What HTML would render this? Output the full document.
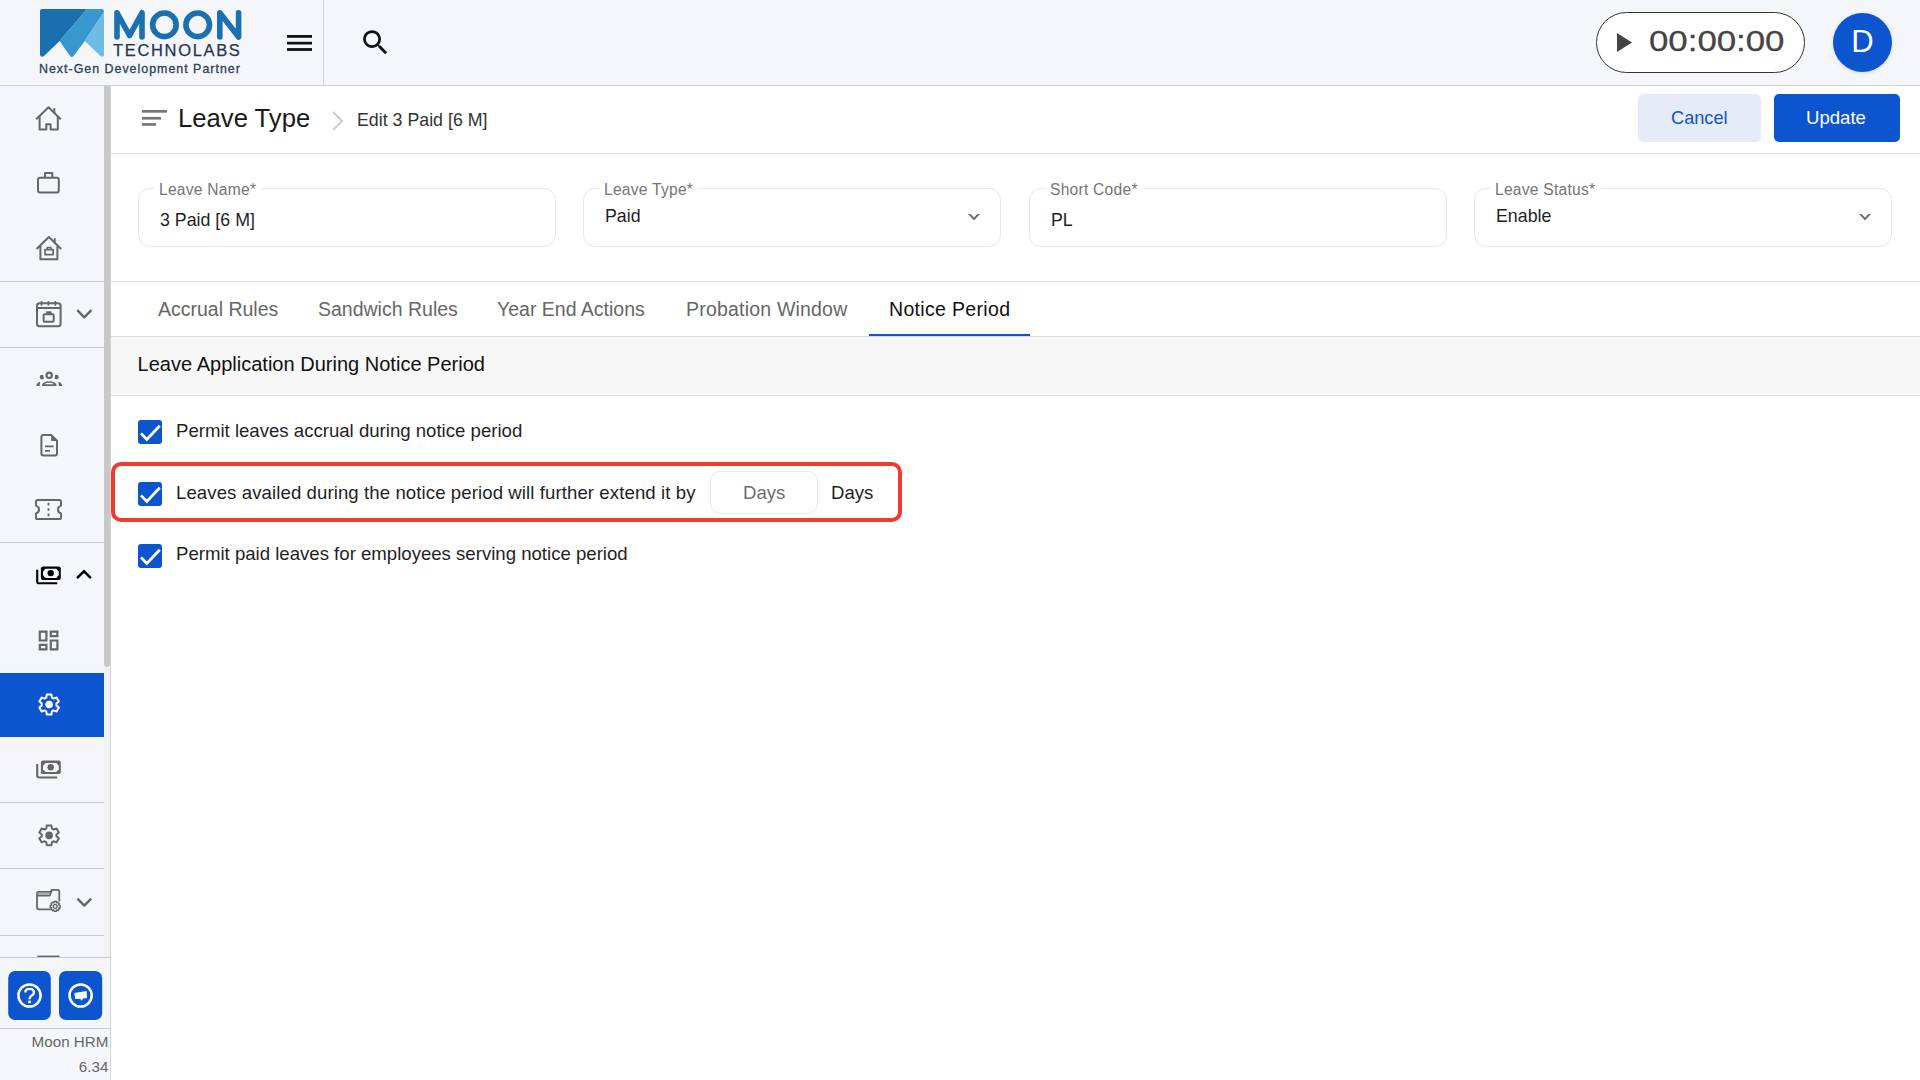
<!DOCTYPE html>
<html><head><meta charset="utf-8">
<style>
*{box-sizing:border-box;margin:0;padding:0}
html,body{width:1920px;height:1080px;overflow:hidden;background:#fff;font-family:"Liberation Sans",sans-serif;color:#1f1f1f}
.abs{position:absolute}
.t{position:absolute;white-space:nowrap;line-height:1}
#hdr{position:absolute;left:0;top:0;width:1920px;height:86px;background:#f5f6fa;border-bottom:1px solid #d2d3d7}
#side{position:absolute;left:0;top:86px;width:111px;height:994px;background:#f5f6fa;border-right:1px solid #d2d3d7}
.sep{position:absolute;left:0;width:104px;height:1px;background:#c9cacd}
.ic{position:absolute;left:0;top:0;overflow:visible}
.g{stroke:#666;fill:none;stroke-width:2}
.field{position:absolute;top:188px;width:418px;height:59px;border:1px solid #e7e8ec;border-radius:12px;background:#fff}
.lbl{position:absolute;top:-9.3px;padding:0 6px 0 5px;letter-spacing:0.25px;background:#fff;font-size:15.6px;line-height:20px;color:#757575;white-space:nowrap}
.val{position:absolute;font-size:17.8px;line-height:1;color:#1f1f1f;white-space:nowrap}
.tab{position:absolute;top:300px;font-size:19.5px;line-height:1;color:#666;white-space:nowrap}
.cb{position:absolute;left:138px;width:24px;height:24px;background:#0d55cf;border-radius:3px}
.row{position:absolute;left:176px;font-size:18.6px;line-height:1;color:#1f1f1f;white-space:nowrap}
</style></head>
<body>
<!-- HEADER -->
<div id="hdr">
  <svg class="abs" style="left:0;top:0" width="330" height="85" viewBox="0 0 330 85">
    <g>
      <path d="M40 11 Q40 9 42 9 L87 9 L59.6 41 L44 56 Q41 58 40 55 Z" fill="#1a6fae"/>
      <path d="M87 9 L102 9 Q104 9 104 12 L84.8 41 L73.5 56 Q71.8 58 70 56 L59.6 41 Z" fill="#3a96ce"/>
      <path d="M104 12 L104 55 Q103.5 58 100.5 56 L84.8 41 Z" fill="#70bbe6"/>
    </g>
    <g stroke="#1a70b0" stroke-width="5.6" fill="none" stroke-linecap="round" stroke-linejoin="round">
      <path d="M117 37 L117 12.8 L129.6 35.5 L142 12.8 L142 37"/>
      <circle cx="164.4" cy="24.8" r="11.8"/>
      <circle cx="197.7" cy="24.8" r="11.8"/>
      <path d="M219.8 37 L219.8 12.8 L238.6 37 L238.6 12.8"/>
    </g>
  </svg>
  <div class="t" style="left:113px;top:42px;font-size:16.5px;color:#26344f;letter-spacing:1.66px;-webkit-text-stroke:0.25px #26344f">TECHNOLABS</div>
  <div class="t" style="left:39px;top:62.6px;font-size:12.4px;color:#2c3e5c;letter-spacing:1.01px;-webkit-text-stroke:0.3px #2c3e5c">Next-Gen Development Partner</div>
  <div class="abs" style="left:323px;top:0;width:1px;height:85px;background:#d2d3d7"></div>
  <svg class="abs" style="left:287px;top:35px" width="25" height="17" viewBox="0 0 25 17"><g fill="#111"><rect x="0" y="0" width="25" height="2.8"/><rect x="0" y="6.8" width="25" height="2.7"/><rect x="0" y="13.1" width="25" height="2.8"/></g></svg>
  <svg class="abs" style="left:359px;top:26px" width="33" height="33" viewBox="0 0 24 24"><path d="M15.5 14h-.79l-.28-.27C15.41 12.59 16 11.11 16 9.5 16 5.91 13.090 3 9.5 3S3 5.91 3 9.5 5.91 16 9.5 16c1.61 0 3.09-.59 4.23-1.57l.27.28v.79l5 4.99L20.49 19l-4.99-5zm-6 0C7.01 14 5 11.99 5 9.5S7.01 5 9.5 5 14 7.01 14 9.5 11.99 14 9.5 14z" fill="#111"/></svg>
  <div class="abs" style="left:1596px;top:12px;width:209px;height:61px;border:1.3px solid #333;border-radius:31px;background:#fff"></div>
  <svg class="abs" style="left:1617px;top:33px" width="16" height="19" viewBox="0 0 16 19"><path d="M0 0 L15 9.5 L0 19 Z" fill="#444"/></svg>
  <div class="t" style="left:1649px;top:27px;font-size:29px;color:#444;-webkit-text-stroke:0.3px #444;transform:scaleX(1.2);transform-origin:0 0">00:00:00</div>
  <div class="abs" style="left:1833px;top:13px;width:59px;height:59px;border-radius:50%;background:#0d55cf;box-shadow:0 1px 4px rgba(0,0,0,0.12)"></div>
  <div class="t" style="left:1851.3px;top:26.3px;font-size:31px;color:#fff">D</div>
</div>

<!-- SIDEBAR -->
<div id="side"></div>
<svg class="abs" style="left:0;top:0" width="111" height="1080" viewBox="0 0 111 1080">
 <g fill="none" stroke="#666" stroke-width="2" stroke-linejoin="round">
  <!-- home -->
  <path d="M36.2 119.3 L48.5 107.2 L60.8 119.3"/>
  <path d="M54.3 108.2 V113.5"/>
  <path d="M39.6 115.8 V129.4 H46.3 V124.3 H50.6 V129.4 H57.8 V115.8"/>
  <!-- briefcase -->
  <rect x="38" y="177.8" width="20.8" height="14.6" rx="2"/>
  <path d="M45 177.5 V173 H52.3 V177.5"/>
  <!-- house briefcase -->
  <path d="M36.6 249 L48.8 237 L61.2 249"/>
  <path d="M54.7 238.2 V243.5"/>
  <path d="M40.4 246 V259.2 H57.4 V246"/>
  <rect x="45" y="249.6" width="8.1" height="5" stroke-width="1.7"/>
  <path d="M47.2 249.4 V247.6 H50.9 V249.4" stroke-width="1.5"/>
  <!-- calendar -->
  <rect x="37" y="303.2" width="23.6" height="23" rx="2.5"/>
  <path d="M37 308 H60.6"/>
  <path d="M41.5 301 V305.8 M48.4 301 V305.8 M55.3 301 V305.8" stroke-width="1.6"/>
  <rect x="43.6" y="314.2" width="10.1" height="7.5" rx="1.2" stroke-width="2"/>
  <path d="M45.6 315 L46.4 311.3 H51.2 L52.2 315 Z" fill="#666" stroke="none"/>
  <path d="M77.2 310.2 L84.3 317.3 L91.4 310.2" stroke-width="2.4"/>
  <!-- people -->
  <circle cx="49.2" cy="375.3" r="2.7" stroke-width="2.2"/>
  <!-- doc -->
  <path d="M43.4 435.1 H51.3 L57 440.8 V453.4 Q57 455.4 55 455.4 H43.4 Q41.4 455.4 41.4 453.4 V437.1 Q41.4 435.1 43.4 435.1 Z"/>
  <path d="M45 446.3 H53.6 M45 450.9 H50" stroke-width="1.7"/>
  <!-- ticket -->
  <path d="M37.6 500 H59.4 Q61 500 61 501.6 V505.6 Q58 506.4 58 509.5 Q58 512.6 61 513.4 V517.4 Q61 519 59.4 519 H37.6 Q36 519 36 517.4 V513.4 Q39 512.6 39 509.5 Q39 506.4 36 505.6 V501.6 Q36 500 37.6 500 Z"/>
  <path d="M48.5 502.8 V505.4 M48.5 508.2 V510.8 M48.5 513.6 V516.2" stroke-width="1.9"/>
  <!-- chevron folder -->
  <path d="M77.4 898.6 L84.3 905.6 L91.2 898.6" stroke-width="2.4"/>
 </g>
 <g fill="#666">
  <circle cx="42.1" cy="377.1" r="2.4"/>
  <circle cx="56.3" cy="377.1" r="2.4"/>
  <circle cx="49.2" cy="375.3" r="5.2" fill="none" stroke="#f5f6fa" stroke-width="1.6"/>
  <path d="M41.7 385.9 Q42.6 381.3 49.2 381.3 Q55.8 381.3 56.8 385.9 Z"/>
  <path d="M44.6 384.2 Q45.6 382.8 49.2 382.8 Q52.8 382.8 53.8 384.2 Z" fill="#f5f6fa"/>
  <path d="M36.3 385.9 Q36.8 382.6 40.2 381.8 L39.6 385.9 Z"/>
  <path d="M62.2 385.9 Q61.7 382.6 58.3 381.8 L58.9 385.9 Z"/>
  <path d="M51.2 435.1 V441 H57 Z"/>
 </g>
 <!-- money black -->
 <g>
  <path d="M37.2 569.8 V581.4 Q37.2 583.3 39.1 583.3 H57.2" stroke="#000" stroke-width="2.1" fill="none"/>
  <rect x="40.9" y="566.4" width="19.9" height="13.5" rx="2.2" fill="#000"/>
  <path d="M43 571.6 L45.4 568.8 H56.3 L58.8 571.6 V575.1 L56.3 577.9 H45.4 L43 575.1 Z" fill="#f5f6fa"/>
  <circle cx="50.7" cy="573.1" r="3.2" fill="#000"/>
  <path d="M77 578.2 L84 571.3 L90.9 578.2" stroke="#000" stroke-width="2.4" fill="none"/>
 </g>
 <!-- dashboard -->
 <path transform="translate(35.4 627.3) scale(1.1)" fill="#666" d="M19 5v2h-4V5h4M9 5v6H5V5h4m10 8v6h-4v-6h4M9 17v2H5v-2h4M21 3h-8v6h8V3zM11 3H3v10h8V3zm10 8h-8v10h8V11zm-10 4H3v6h8v-6z"/>
 <!-- active -->
 <rect x="0" y="673" width="104" height="64" fill="#0d55cf"/>
 <g transform="translate(49.1 704.5)">
  <path d="M-2.89 -6.81 L-2.29 -9.94 L2.29 -9.94 L2.89 -6.81 L4.45 -5.91 L7.46 -6.96 L9.75 -2.98 L7.34 -0.90 L7.34 0.90 L9.75 2.98 L7.46 6.96 L4.45 5.91 L2.89 6.81 L2.29 9.94 L-2.29 9.94 L-2.89 6.81 L-4.45 5.91 L-7.46 6.96 L-9.75 2.98 L-7.34 0.90 L-7.34 -0.90 L-9.75 -2.98 L-7.46 -6.96 L-4.45 -5.91 Z" fill="none" stroke="#fff" stroke-width="2" stroke-linejoin="round"/>
  <circle r="3.8" fill="#fff"/>
 </g>
 <!-- money gray -->
 <g transform="translate(0 194.2)">
  <path d="M37.2 569.8 V581.4 Q37.2 583.3 39.1 583.3 H57.2" stroke="#666" stroke-width="2.1" fill="none"/>
  <rect x="40.9" y="566.4" width="19.9" height="13.5" rx="2.2" fill="#666"/>
  <path d="M43 571.6 L45.4 568.8 H56.3 L58.8 571.6 V575.1 L56.3 577.9 H45.4 L43 575.1 Z" fill="#f5f6fa"/>
  <circle cx="50.7" cy="573.1" r="3.2" fill="#666"/>
 </g>
 <!-- gear gray -->
 <g transform="translate(49.1 835.4)">
  <path d="M-2.89 -6.81 L-2.29 -9.94 L2.29 -9.94 L2.89 -6.81 L4.45 -5.91 L7.46 -6.96 L9.75 -2.98 L7.34 -0.90 L7.34 0.90 L9.75 2.98 L7.46 6.96 L4.45 5.91 L2.89 6.81 L2.29 9.94 L-2.29 9.94 L-2.89 6.81 L-4.45 5.91 L-7.46 6.96 L-9.75 2.98 L-7.34 0.90 L-7.34 -0.90 L-9.75 -2.98 L-7.46 -6.96 L-4.45 -5.91 Z" fill="none" stroke="#666" stroke-width="2" stroke-linejoin="round"/>
  <circle r="3.8" fill="#666"/>
 </g>
 <!-- folder gear -->
 <g fill="none" stroke="#666" stroke-width="1.8" stroke-linejoin="round">
  <path d="M50.6 909.4 H38.8 Q37 909.4 37 907.6 V893.6 Q37 891.8 38.8 891.8 H50.3 L51.9 889.8 H57.6 Q59.3 889.8 59.3 891.6 V901.6"/>
  <path d="M37 895.6 H49.6 L51.9 890.5"/>
 </g>
 <path d="M37.8 892.7 H50.2 L49 895 H37.8 Z" fill="#aaa"/>
 <g transform="translate(55.2 906.4)">
  <path d="M-1.33 -3.66 L-1.04 -4.89 L1.04 -4.89 L1.33 -3.66 L1.65 -3.53 L2.72 -4.19 L4.19 -2.72 L3.53 -1.65 L3.66 -1.33 L4.89 -1.04 L4.89 1.04 L3.66 1.33 L3.53 1.65 L4.19 2.72 L2.72 4.19 L1.65 3.53 L1.33 3.66 L1.04 4.89 L-1.04 4.89 L-1.33 3.66 L-1.65 3.53 L-2.72 4.19 L-4.19 2.72 L-3.53 1.65 L-3.66 1.33 L-4.89 1.04 L-4.89 -1.04 L-3.66 -1.33 L-3.53 -1.65 L-4.19 -2.72 L-2.72 -4.19 L-1.65 -3.53 Z" fill="#f5f6fa" stroke="#666" stroke-width="1.5" stroke-linejoin="round"/>
  <circle r="1.9" fill="none" stroke="#666" stroke-width="1.4"/>
 </g>
 <!-- separators -->
 <g fill="#c9cacd">
  <rect x="0" y="281" width="104" height="1"/>
  <rect x="0" y="347" width="104" height="1"/>
  <rect x="0" y="542" width="104" height="1"/>
  <rect x="0" y="802" width="104" height="1"/>
  <rect x="0" y="868" width="104" height="1"/>
  <rect x="0" y="935" width="104" height="1"/>
 </g>
 <rect x="37.3" y="955.6" width="22.3" height="1.5" fill="#666"/>
 <!-- scrollbar -->
 <rect x="104" y="86" width="6" height="871" fill="#f1f1f1"/>
 <path d="M104 86 H110 V664 Q110 667 107 667 Q104 667 104 664 Z" fill="#c8c8c8"/>
 <!-- bottom panel -->
 <rect x="0" y="957" width="110" height="123" fill="#f5f6fa"/>
 <rect x="0" y="957" width="110" height="1" fill="#c9cacd"/>
 <rect x="0" y="1028" width="110" height="1" fill="#c9cacd"/>
 <rect x="8.2" y="971" width="42.6" height="49" rx="7" fill="#0d55cf"/>
 <rect x="59" y="971" width="43.2" height="49" rx="7" fill="#0d55cf"/>
 <circle cx="29.5" cy="995.5" r="11.1" fill="none" stroke="#fff" stroke-width="2.5"/>
 <path d="M25.3 992.4 Q25.3 988.9 29.6 988.9 Q33.9 988.9 33.9 992.4 Q33.9 994.3 31.7 995.6 Q29.5 996.9 29.5 999.2" fill="none" stroke="#fff" stroke-width="2.3"/>
 <rect x="28.2" y="1000.6" width="2.6" height="2.6" fill="#fff"/>
 <circle cx="80.6" cy="995.5" r="11.1" fill="none" stroke="#fff" stroke-width="2.5"/>
 <path d="M74.3 992.9 L86.6 991.1 L87 998 L83 998.5 L81.7 1000.8 L80.2 998.8 L75.2 999.1 Z" fill="#fff"/>
</svg>
<div class="t" style="right:1811.6px;top:1034px;font-size:15.2px;color:#666">Moon HRM</div>
<div class="t" style="right:1811.6px;top:1059px;font-size:15.2px;color:#666">6.34</div>


<!-- MAIN -->
<div class="abs" style="left:111px;top:153px;width:1809px;height:1px;background:#dedede"></div>
<svg class="abs" style="left:142px;top:110px" width="25" height="16" viewBox="0 0 25 16"><g fill="#777"><rect x="0" y="0" width="25" height="2.7"/><rect x="0" y="6.9" width="19" height="2.7"/><rect x="0" y="13.1" width="14" height="2.7"/></g></svg>
<div class="t" style="left:178.3px;top:104.9px;font-size:26.6px;color:#1a1a1a;transform:scaleX(0.965);transform-origin:0 0">Leave Type</div>
<svg class="abs" style="left:331px;top:110px" width="14" height="22" viewBox="0 0 14 22"><path d="M2 2 L11 11 L2 20" stroke="#cfcfcf" stroke-width="2.2" fill="none"/></svg>
<div class="t" style="left:357px;top:112px;font-size:17.8px;color:#333">Edit 3 Paid [6 M]</div>
<div class="abs" style="left:1638px;top:94px;width:123px;height:48px;background:#e6ecf7;border-radius:5px"></div>
<div class="t" style="left:1671px;top:109px;font-size:18.2px;color:#0d55cf">Cancel</div>
<div class="abs" style="left:1774px;top:94px;width:126px;height:48px;background:#0d55cf;border-radius:5px"></div>
<div class="t" style="left:1806px;top:109px;font-size:18.6px;color:#fff">Update</div>

<!-- fields -->
<div class="field" style="left:138px"><div class="lbl" style="left:15px">Leave Name*</div><div class="val" style="left:21px;top:22.5px">3 Paid [6 M]</div></div>
<div class="field" style="left:583px"><div class="lbl" style="left:15px">Leave Type*</div><div class="val" style="left:21px;top:19.2px">Paid</div>
  <svg class="abs" style="left:384px;top:25px" width="12" height="7" viewBox="0 0 12 7"><path d="M0 0.1 L2.7 0.1 L6 3.5 L9.3 0.1 L12 0.1 L6 6.4 Z" fill="#707070"/></svg></div>
<div class="field" style="left:1029px"><div class="lbl" style="left:15px">Short Code*</div><div class="val" style="left:21px;top:22.6px">PL</div></div>
<div class="field" style="left:1474px"><div class="lbl" style="left:15px">Leave Status*</div><div class="val" style="left:21px;top:19.2px">Enable</div>
  <svg class="abs" style="left:384px;top:25px" width="12" height="7" viewBox="0 0 12 7"><path d="M0 0.1 L2.7 0.1 L6 3.5 L9.3 0.1 L12 0.1 L6 6.4 Z" fill="#707070"/></svg></div>

<div class="abs" style="left:111px;top:281px;width:1809px;height:1px;background:#dedede"></div>
<div class="tab" style="left:158px">Accrual Rules</div>
<div class="tab" style="left:318px">Sandwich Rules</div>
<div class="tab" style="left:497px">Year End Actions</div>
<div class="tab" style="left:686px;letter-spacing:0.2px">Probation Window</div>
<div class="tab" style="left:889px;color:#111;letter-spacing:0.33px">Notice Period</div>
<div class="abs" style="left:869px;top:334px;width:161px;height:2px;background:#0d55cf"></div>
<div class="abs" style="left:111px;top:336px;width:1809px;height:60px;background:#f7f7f7;border-top:1px solid #dedede;border-bottom:1px solid #dedede"></div>
<div class="t" style="left:137.6px;top:353.7px;font-size:20.05px;color:#111">Leave Application During Notice Period</div>

<!-- rows -->
<div class="cb" style="top:420px"><svg width="24" height="24" viewBox="0 0 24 24"><path d="M3 13.4 L8.8 19.5 L21.8 5.8" stroke="#fff" stroke-width="2.8" fill="none"/></svg></div>
<div class="row" style="top:421.7px">Permit leaves accrual during notice period</div>
<div class="abs" style="left:111px;top:462px;width:791px;height:60px;border:4px solid #ef3b30;border-radius:10px"></div>
<div class="cb" style="top:482px"><svg width="24" height="24" viewBox="0 0 24 24"><path d="M3 13.4 L8.8 19.5 L21.8 5.8" stroke="#fff" stroke-width="2.8" fill="none"/></svg></div>
<div class="row" style="top:483.5px;letter-spacing:0.09px">Leaves availed during the notice period will further extend it by</div>
<div class="abs" style="left:710px;top:470.5px;width:108px;height:43px;border:1px solid #e6e8ec;border-radius:10px"></div>
<div class="row" style="left:743px;top:483.5px;color:#6e6e6e">Days</div>
<div class="row" style="left:831px;top:483.5px">Days</div>
<div class="cb" style="top:544px"><svg width="24" height="24" viewBox="0 0 24 24"><path d="M3 13.4 L8.8 19.5 L21.8 5.8" stroke="#fff" stroke-width="2.8" fill="none"/></svg></div>
<div class="row" style="top:545.3px">Permit paid leaves for employees serving notice period</div>

</body></html>
